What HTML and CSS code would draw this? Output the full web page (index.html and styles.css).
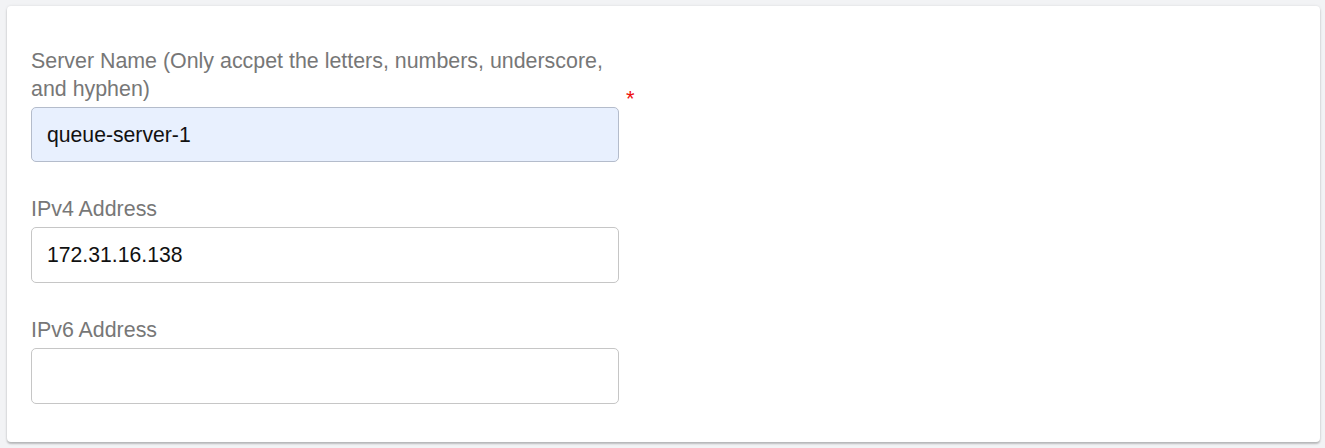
FILE: index.html
```html
<!DOCTYPE html>
<html>
<head>
<meta charset="utf-8">
<link rel="stylesheet" href="styles.css">
</head>
<body>
<div class="card">
  <div class="field">
    <label class="label" for="name">Server Name (Only accpet the letters, numbers, underscore, and hyphen)</label>
    <div class="control">
      <input id="name" class="input autofill" type="text" value="queue-server-1">
      <span class="required">*</span>
    </div>
  </div>
  <div class="field">
    <label class="label" for="ipv4">IPv4 Address</label>
    <div class="control">
      <input id="ipv4" class="input" type="text" value="172.31.16.138">
    </div>
  </div>
  <div class="field">
    <label class="label" for="ipv6">IPv6 Address</label>
    <div class="control">
      <input id="ipv6" class="input" type="text" value="">
    </div>
  </div>
</div>
</body>
</html>
```

FILE: styles.css
```css
html, body {
  margin: 0;
  padding: 0;
}
body {
  background: #f2f3f5;
  font-family: "Liberation Sans", Arial, sans-serif;
  padding: 6px 5px 5px 7px;
  box-sizing: border-box;
  height: 448px;
}
.card {
  background: #ffffff;
  border-radius: 4px;
  box-shadow: 0 2px 2px rgba(0,0,0,0.22), 0 0 3px rgba(0,0,0,0.10);
  padding: 41px 24px 38px 24px;
  display: flex;
  flex-direction: column;
  gap: 33px;
}
.field {
  display: flex;
  flex-direction: column;
  width: 600px;
}
.label {
  font-size: 21.4px;
  line-height: 28px;
  color: #777777;
  margin-bottom: 4px;
  width: 600px;
}
.control {
  position: relative;
  width: 588px;
}
.input {
  display: block;
  width: 588px;
  height: 56px;
  box-sizing: border-box;
  border: 1px solid #c6c6c6;
  border-radius: 5px;
  padding: 0 15px;
  font-family: "Liberation Sans", Arial, sans-serif;
  font-size: 21.2px;
  color: #111111;
  background: #ffffff;
  outline: none;
}
.input.autofill {
  background: #e8f0fe;
  border-color: #b4bccb;
  height: 55px;
}
.required {
  position: absolute;
  left: 595px;
  top: -22px;
  color: #ee1111;
  font-size: 22px;
  line-height: 28px;
}
```
